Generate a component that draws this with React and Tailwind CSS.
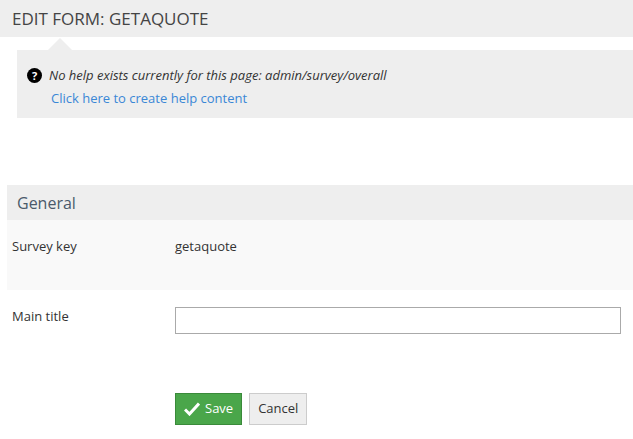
export default function App() {
  return (
    <div className="w-[633px] h-[439px] bg-white text-[#333] overflow-hidden" style={{fontFamily:'"Open Sans", sans-serif'}}>
      <div className="h-[37px] bg-[#eeeeee] flex items-center pl-[12px] text-[17px] text-[#444]">EDIT FORM: GETAQUOTE</div>
      <div className="relative ml-[17px] mt-[13px] h-[68px] bg-[#eeeeee] pl-[10px] pt-[16px] text-[13px]">
        <div className="absolute -top-[12px] left-[31px] w-0 h-0 border-l-[12px] border-r-[12px] border-b-[12px] border-l-transparent border-r-transparent border-b-[#eeeeee]"></div>
        <div className="flex items-center gap-[7px] italic text-[#333]">
          <span className="w-[15px] h-[15px] rounded-full bg-black text-white text-[11px] font-bold not-italic flex items-center justify-center">?</span>
          No help exists currently for this page: admin/survey/overall
        </div>
        <div className="pl-[24px] mt-[3px] text-[#3a87d6]">Click here to create help content</div>
      </div>
      <div className="ml-[7px] mt-[67px]">
        <div className="h-[35px] bg-[#eeeeee] flex items-center pl-[10px] text-[16px] text-[#4a5a6a]">General</div>
        <div className="h-[70px] bg-[#f9f9f9] flex pt-[17px] text-[13px]">
          <div className="w-[168px] pl-[5px]">Survey key</div>
          <div>getaquote</div>
        </div>
        <div className="h-[70px] flex pt-[17px] text-[13px]">
          <div className="w-[168px] pl-[5px]">Main title</div>
          <div className="w-[446px] h-[27px] border border-[#aaa] mt-[0px] bg-white"></div>
        </div>
        <div className="flex gap-[7px] ml-[168px] mt-[33px] text-[13px]">
          <button className="h-[32px] px-[8px] bg-[#4aa64a] border border-[#3a8a3a] text-white flex items-center gap-[5px]">
            <svg width="16" height="14" viewBox="0 0 16 14"><path d="M1 7.5 L5.5 12 L15 1.5" fill="none" stroke="white" strokeWidth="3"/></svg>
            Save
          </button>
          <button className="h-[32px] px-[8px] bg-[#eeeeee] border border-[#ccc] text-[#333]">Cancel</button>
        </div>
      </div>
    </div>
  );
}
